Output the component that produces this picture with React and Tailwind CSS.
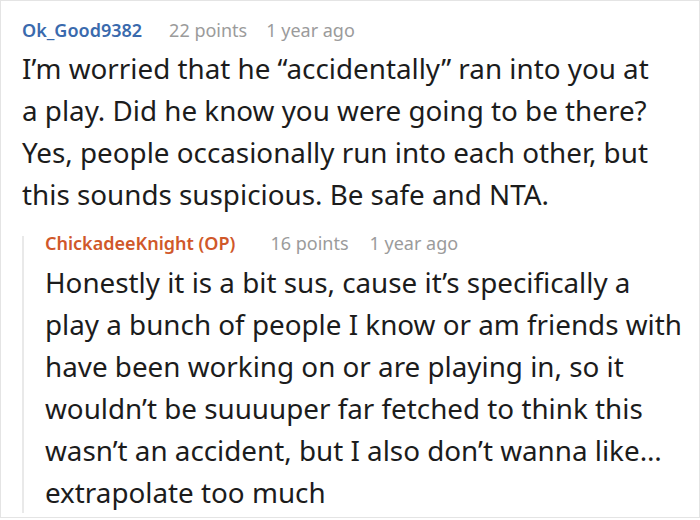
import React from 'react';

const Meta = ({ name, color, points, age, gapA, gapB, lead }) => (
  <div className={`flex items-baseline text-[18px] whitespace-nowrap ${lead}`}>
    <span className={`font-semibold ${color}`}>{name}</span>
    <span className={`${gapA} text-[#9b9b9b]`}>{points}</span>
    <span className={`${gapB} text-[#9b9b9b]`}>{age}</span>
  </div>
);

const Lines = ({ lines, className }) => (
  <p className={`text-[27.8px] leading-[42px] text-[#1c1c1c] whitespace-nowrap ${className}`}>
    {lines.map((l, i) => (
      <React.Fragment key={i}>
        {l}
        {i < lines.length - 1 && <br />}
      </React.Fragment>
    ))}
  </p>
);

export default function App() {
  return (
    <div
      className="w-[700px] h-[520px] bg-white overflow-hidden"
      style={{ fontFamily: '"Noto Sans", "Open Sans", sans-serif' }}
    >
      <div className="h-[518px] border border-[#e4e4e4] pl-[21px] pt-[20px]">
        <Meta
          name="Ok_Good9382"
          color="text-[#3a6aad]"
          points="22 points"
          age="1 year ago"
          gapA="ml-[27px]"
          gapB="ml-[19px]"
          lead="leading-[18px]"
        />
        <Lines
          className="mt-[8px]"
          lines={[
            'I’m worried that he “accidentally” ran into you at',
            'a play. Did he know you were going to be there?',
            'Yes, people occasionally run into each other, but',
            'this sounds suspicious. Be safe and NTA.',
          ]}
        />
        <div className="mt-[21px] border-l-2 border-[#e9e9e9] pl-[21px]">
          <Meta
            name="ChickadeeKnight (OP)"
            color="text-[#d0582a]"
            points="16 points"
            age="1 year ago"
            gapA="ml-[35px]"
            gapB="ml-[21px]"
            lead="leading-[14px]"
          />
          <Lines
            className="mt-[11px]"
            lines={[
              'Honestly it is a bit sus, cause it’s specifically a',
              'play a bunch of people I know or am friends with',
              'have been working on or are playing in, so it',
              'wouldn’t be suuuuper far fetched to think this',
              'wasn’t an accident, but I also don’t wanna like…',
              'extrapolate too much',
            ]}
          />
        </div>
      </div>
    </div>
  );
}
